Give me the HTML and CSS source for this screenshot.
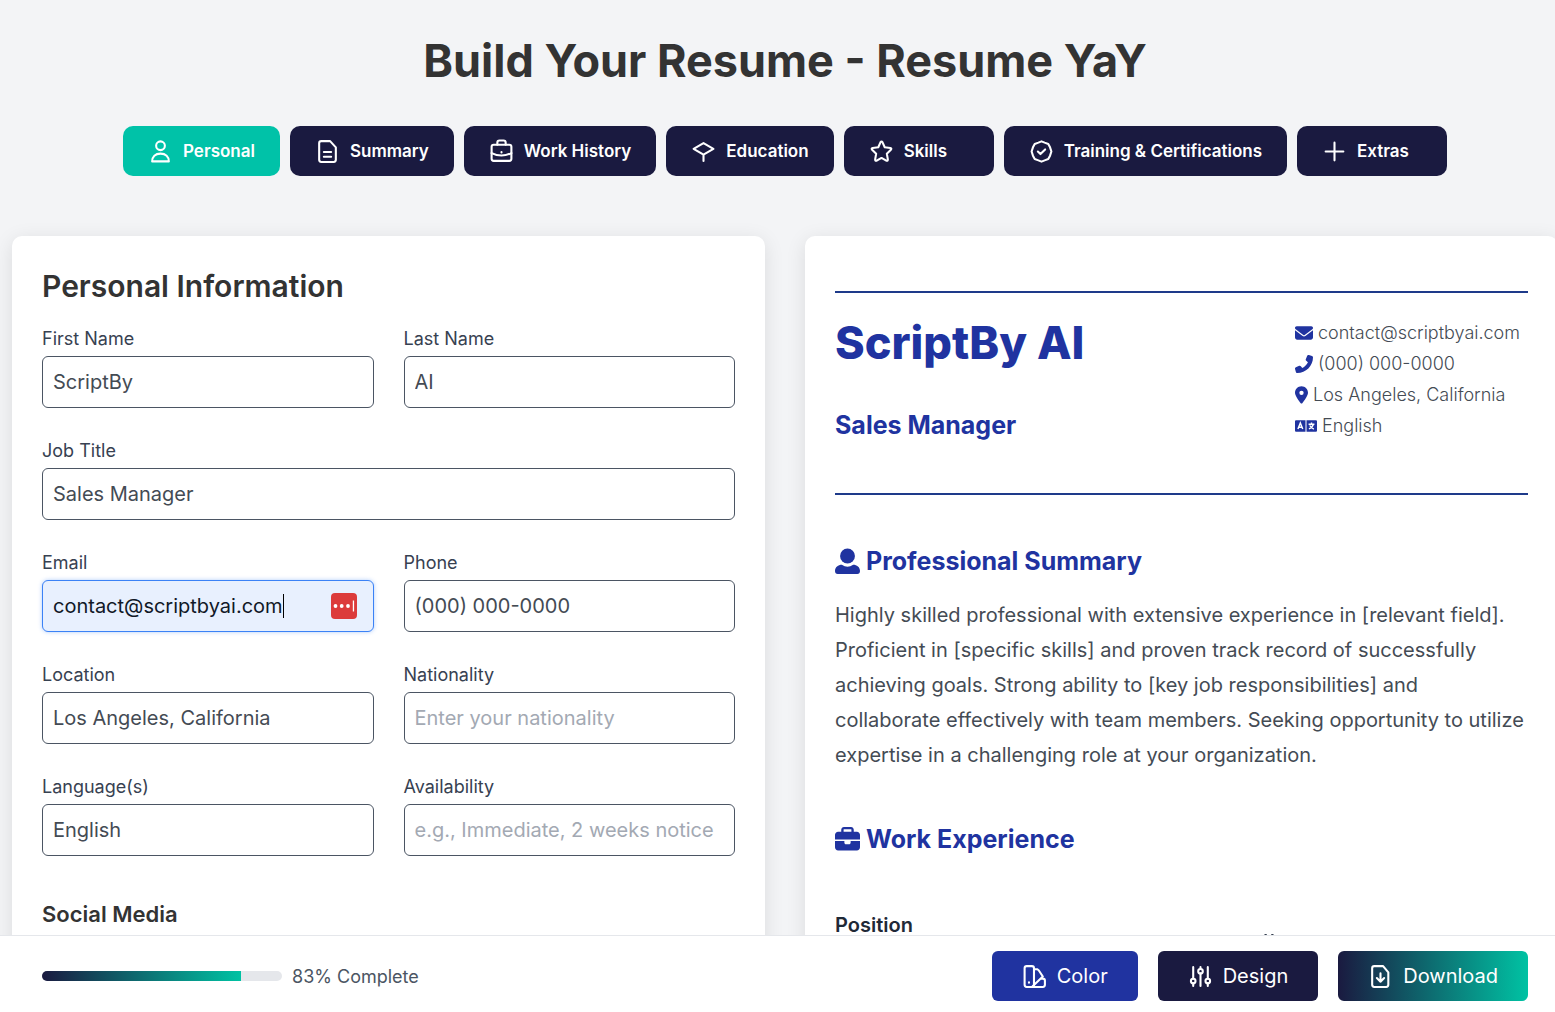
FILE: index.html
```html
<!DOCTYPE html>
<html lang="en">
<head>
<meta charset="utf-8">
<title>Build Your Resume - Resume YaY</title>
<link rel="stylesheet" href="styles.css">
</head>
<body>
<div class="app">
<main class="content">
  <h1 class="title">Build Your Resume - Resume YaY</h1>
  <nav class="tabs" aria-label="Resume sections">
    <button class="tab active" type="button"><svg class="icon" viewBox="0 0 24 24"><circle cx="12" cy="6.500" r="4.200"/><path d="M4 21.500c0-4.500 3-7.500 8-7.500s8 3 8 7.500z"/></svg>Personal</button>
    <button class="tab" type="button"><svg class="icon" viewBox="0 0 24 24"><path d="M6 2h8.500l5.500 6v12a2 2 0 0 1-2 2H6a2 2 0 0 1-2-2V4a2 2 0 0 1 2-2zM8.500 12.500h7M8.500 17h7"/></svg>Summary</button>
    <button class="tab" type="button"><svg class="icon" viewBox="0 0 24 24"><rect x="2.500" y="5.500" width="19" height="15.500" rx="2"/><path d="M8 5.500v-2a2 2 0 0 1 2-2h4a2 2 0 0 1 2 2v2M2.500 13.500c6 3 13 3 19 0M12 12.500v.5"/></svg>Work History</button>
    <button class="tab" type="button"><svg class="icon" viewBox="0 0 24 24"><path d="M12 4l9.500 5.500L12 15 2.500 9.500zM12 15v6"/></svg>Education</button>
    <button class="tab" type="button"><svg class="icon" viewBox="0 0 24 24"><path d="M11 3.200q1-1.700 2 0l2.100 4.700 5.400.7q1.600.4.500 1.800l-3.900 3.700 1 5.500q.1 1.700-1.500 1.200L12 18.200l-4.600 2.600q-1.600.5-1.500-1.200l1-5.500L3 10.400q-1.100-1.400.5-1.800l5.400-.7z"/></svg>Skills</button>
    <button class="tab" type="button"><svg class="icon" viewBox="0 0 24 24"><path d="M12 2.300l3 1.200 3.500 1.300 1.700 3.200 1.300 4-1.300 4-1.700 3.200-3.500 1.300-3 1.200-3-1.200-3.500-1.300L3.800 16l-1.300-4 1.300-4 1.700-3.200L9 3.500zM8.500 12l2.500 2.500 4.500-4.500"/></svg>Training &amp; Certifications</button>
    <button class="tab" type="button"><svg class="icon" viewBox="0 0 24 24"><path d="M12 3.500v17M3.500 12h17"/></svg>Extras</button>
  </nav>
  <div class="panels">
    <form class="card form">
      <h2 class="form-title">Personal Information</h2>
      <div class="fields">
        <label class="field">First Name<input class="input" type="text" value="ScriptBy"></label>
        <label class="field">Last Name<input class="input" type="text" value="AI"></label>
        <label class="field wide">Job Title<input class="input" type="text" value="Sales Manager"></label>
        <label class="field">Email
          <span class="input focused"><input class="bare" type="text" value="contact@scriptbyai.com"><span class="caret"></span><svg class="keeper" viewBox="0 0 26 26"><rect width="26" height="26" rx="4"/><g fill="#fff"><circle cx="4.500" cy="13" r="1.900"/><circle cx="10.700" cy="13" r="1.900"/><circle cx="17" cy="13" r="1.900"/><path d="M21.800 7.500h1.300v11h-1.300z"/></g></svg></span>
        </label>
        <label class="field">Phone<input class="input" type="text" value="(000) 000-0000"></label>
        <label class="field">Location<input class="input" type="text" value="Los Angeles, California"></label>
        <label class="field">Nationality<input class="input" type="text" placeholder="Enter your nationality"></label>
        <label class="field">Language(s)<input class="input" type="text" value="English"></label>
        <label class="field">Availability<input class="input" type="text" placeholder="e.g., Immediate, 2 weeks notice"></label>
      </div>
      <h3 class="subhead">Social Media</h3>
    </form>
    <article class="card resume">
      <header class="resume-head">
        <div>
          <h2 class="name">ScriptBy AI</h2>
          <p class="role">Sales Manager</p>
        </div>
        <ul class="contacts">
          <li><svg class="glyph" viewBox="0 0 512 512"><path d="M48 64C21.500 64 0 85.500 0 112c0 15.100 7.100 29.300 19.200 38.400L236.800 313.600c11.400 8.500 27 8.500 38.400 0L492.800 150.400c12.100-9.100 19.200-23.300 19.200-38.400c0-26.500-21.500-48-48-48H48zM0 176V384c0 35.300 28.700 64 64 64H448c35.300 0 64-28.700 64-64V176L294.400 339.200c-22.800 17.100-54 17.100-76.800 0L0 176z"/></svg>contact@scriptbyai.com</li>
          <li><svg class="glyph" viewBox="0 0 512 512"><path d="M347 24c8-19 29-29 48-23l88 24c17 5 29 20 29 39 0 247-201 448-448 448-19 0-34-12-39-29L1 395c-6-19 4-40 23-48l96-40c16-7 35-2 46 12l41 49c70-33 128-91 161-161l-49-41c-14-11-19-30-12-46z"/></svg>(000) 000-0000</li>
          <li><svg class="glyph pin" viewBox="0 0 384 512"><path fill-rule="evenodd" d="M215.700 499.200C267 435 384 279.400 384 192C384 86 298 0 192 0S0 86 0 192c0 87.400 117 243 168.300 307.200c12.300 15.300 35.100 15.300 47.400 0zM192 128a64 64 0 1 1 0 128 64 64 0 1 1 0-128z"/></svg>Los Angeles, California</li>
          <li><svg class="glyph lang" viewBox="0 0 640 512"><path d="M30 86h275v340H30a30 30 0 0 1-30-30V116a30 30 0 0 1 30-30zM335 86h275a30 30 0 0 1 30 30v280a30 30 0 0 1-30 30H335z"/><g fill="none" stroke="#fff" stroke-width="42"><path d="M85 345l70-180 70 180M108 290h94M395 205h170M480 155v50M535 205q-35 105-130 135M430 240q35 70 120 105"/></g></svg>English</li>
        </ul>
      </header>
      <section>
        <h3 class="section-title"><svg class="glyph" viewBox="0 0 512 512"><circle cx="256" cy="144" r="152"/><path d="M140 320a195 195 0 0 0 232 0c75 0 140 50 140 130 0 35-20 62-55 62H55c-35 0-55-27-55-62 0-80 65-130 140-130z"/></svg>Professional Summary</h3>
        <p class="summary">Highly skilled professional with extensive experience in [relevant field]. Proficient in [specific skills] and proven track record of successfully achieving goals. Strong ability to [key job responsibilities] and collaborate effectively with team members. Seeking opportunity to utilize expertise in a challenging role at your organization.</p>
      </section>
      <section>
        <h3 class="section-title"><svg class="glyph" viewBox="0 0 512 512"><path fill-rule="evenodd" d="M184 48H328c4.400 0 8 3.600 8 8V96H176V56c0-4.400 3.600-8 8-8zm-56 8V96H64C28.700 96 0 124.700 0 160v96H512V160c0-35.300-28.700-64-64-64H384V56c0-30.900-25.100-56-56-56H184c-30.900 0-56 25.100-56 56zM512 288H320v32c0 17.700-14.300 32-32 32H224c-17.700 0-32-14.300-32-32V288H0V416c0 35.300 28.700 64 64 64H448c35.300 0 64-28.700 64-64V288z"/></svg>Work Experience</h3>
        <div class="job">
          <strong>Position</strong>
          <div class="dates"><svg class="calendar" viewBox="0 0 448 512"><path d="M96 0h64v64h128V0h64v64h48a48 48 0 0 1 48 48v352a48 48 0 0 1-48 48H48a48 48 0 0 1-48-48V112a48 48 0 0 1 48-48h48z"/></svg></div>
        </div>
      </section>
    </article>
  </div>
</main>
<footer class="bar">
  <div class="progress" role="progressbar" aria-label="Completion" aria-valuenow="83"><div class="fill" style="width:83%"></div></div>
  <span class="percent">83% Complete</span>
  <div class="actions">
    <button class="action color" type="button"><svg class="icon" viewBox="0 0 24 24"><rect x="2.500" y="2" width="9" height="20" rx="2"/><path d="M11.500 5h3l1.500 1 4 6L10 21.500M18 14h2a2 2 0 0 1 2 2v4a2 2 0 0 1-2 2H9.500M6.700 17.500v.5"/></svg>Color</button>
    <button class="action" type="button"><svg class="icon" viewBox="0 0 24 24"><path d="M5 3v11M5 18.500V21M12 3v1.500M12 9v12M19 3v11M19 18.500V21"/><circle cx="5" cy="16.300" r="2.200"/><circle cx="12" cy="7" r="2.200"/><circle cx="19" cy="16.300" r="2.200"/></svg>Design</button>
    <button class="action download" type="button"><svg class="icon" viewBox="0 0 24 24"><path d="M6 2h8.500l5 6v12a2 2 0 0 1-2 2H6a2 2 0 0 1-2-2V4a2 2 0 0 1 2-2zM12 9v8M8.500 13.500L12 17l3.500-3.500"/></svg>Download</button>
  </div>
</footer>
</div>
</body>
</html>
```
FILE: styles.css
```css
* { box-sizing: border-box; }
body { margin: 0; overflow: hidden; background: #f3f4f6; color: #374151; font-family: Inter, sans-serif; font-size: 18px; }
h1, h2, h3, p, ul { margin: 0; padding: 0; }
button, input { font: inherit; }
svg { display: block; flex: none; }
.app { display: flex; flex-direction: column; width: calc(100% + 15px); height: 100vh; }
.content { flex: 1; min-height: 0; overflow: hidden auto; scrollbar-width: none; padding: 32px 12px 0; }
.title { font-size: 45px; line-height: 58px; font-weight: 700; text-align: center; color: #333; }
.tabs { display: flex; justify-content: center; gap: 10px; margin: 36px 0 60px; }
.tab { display: flex; align-items: center; gap: 10px; min-width: 150px; height: 50px; padding: 0 25px; border: 0; border-radius: 10px; background: #1a1a40; color: #fff; font-size: 17px; font-weight: 600; white-space: nowrap; }
.tab.active { background: #00c2a8; }
.icon { width: 25px; height: 25px; fill: none; stroke: currentColor; stroke-width: 2; stroke-linecap: round; stroke-linejoin: round; }
.panels { display: grid; grid-template-columns: 1fr 1fr; gap: 40px; }
.card { padding: 30px; background: #fff; border-radius: 10px; box-shadow: 0 4px 20px rgba(0, 0, 0, .1); }
.form-title { margin-bottom: 20px; font-size: 30px; line-height: 40px; font-weight: 600; color: #333; }
.fields { display: grid; grid-template-columns: 1fr 1fr; gap: 30px; }
.field { display: flex; flex-direction: column; gap: 4px; font-size: 18px; line-height: 26px; }
.wide { grid-column: 1 / -1; }
.input { width: 100%; height: 52px; padding: 0 10px; border: 1px solid #4b5563; border-radius: 6px; background: #fff; color: #444b54; font-size: 20px; font-weight: 400; outline: 0; }
.input::placeholder { color: #a3a9b3; }
.focused { display: flex; align-items: center; padding-right: 16px; border-color: #3b82f6; background: #e8f0fe; color: #111827; box-shadow: 0 0 4px rgba(59, 130, 246, .4); }
.bare { field-sizing: content; padding: 0; border: 0; background: none; color: inherit; outline: 0; }
.caret { width: 1px; height: 24px; background: #000; }
.keeper { width: 26px; height: 26px; margin-left: auto; fill: #dc3b3b; }
.subhead { margin: 42px 0 200px; font-size: 22px; line-height: 32px; font-weight: 600; color: #333; }
.resume { padding-top: 55px; color: #444b54; }
.resume-head { display: flex; justify-content: space-between; height: 204px; padding: 20px 8px 0 0; border: solid #1e3a8a; border-width: 2px 0; }
.name { font-size: 45px; line-height: 60px; font-weight: 800; color: #2033a0; }
.role { margin-top: 34px; font-size: 25px; line-height: 36px; font-weight: 700; color: #2033a0; }
.contacts { padding-top: 4px; list-style: none; font-size: 18px; font-weight: 300; }
.contacts li { display: flex; align-items: center; gap: 5px; height: 31px; }
.glyph { width: 18px; height: 18px; fill: #2033a0; }
.pin { width: 13px; }
.lang { width: 22px; }
.section-title { display: flex; align-items: center; gap: 6px; margin: 46px 0 17px; font-size: 25px; line-height: 40px; font-weight: 700; color: #2033a0; }
.section-title .glyph { width: 25px; height: 25px; overflow: visible; }
.summary { font-size: 20px; line-height: 35px; font-weight: 400; }
.job { display: flex; justify-content: space-between; padding-top: 33px; font-size: 20px; line-height: 32px; color: #1f2937; }
.job strong { font-weight: 600; }
.dates { width: 267px; padding-top: 25px; }
.calendar { width: 16px; height: 18px; fill: #374151; }
.bar { display: flex; align-items: center; gap: 10px; height: 77px; padding: 4px 42px 0; border-top: 1px solid #e5e7eb; background: #fff; }
.progress { width: 240px; height: 10px; border-radius: 5px; overflow: hidden; background: #e5e7eb; }
.fill { height: 100%; background: linear-gradient(90deg, #1a1a40, #00c2a3); }
.percent { color: #4b5563; }
.actions { display: flex; gap: 20px; margin-left: auto; }
.action { display: flex; align-items: center; gap: 10px; height: 50px; padding: 0 30px; border: 0; border-radius: 6px; background: #1a1a40; color: #fff; font-size: 20px; font-weight: 400; }
.color { background: #2033a0; }
.download { background: linear-gradient(90deg, #1a1a40, #00c2a3); }
```
